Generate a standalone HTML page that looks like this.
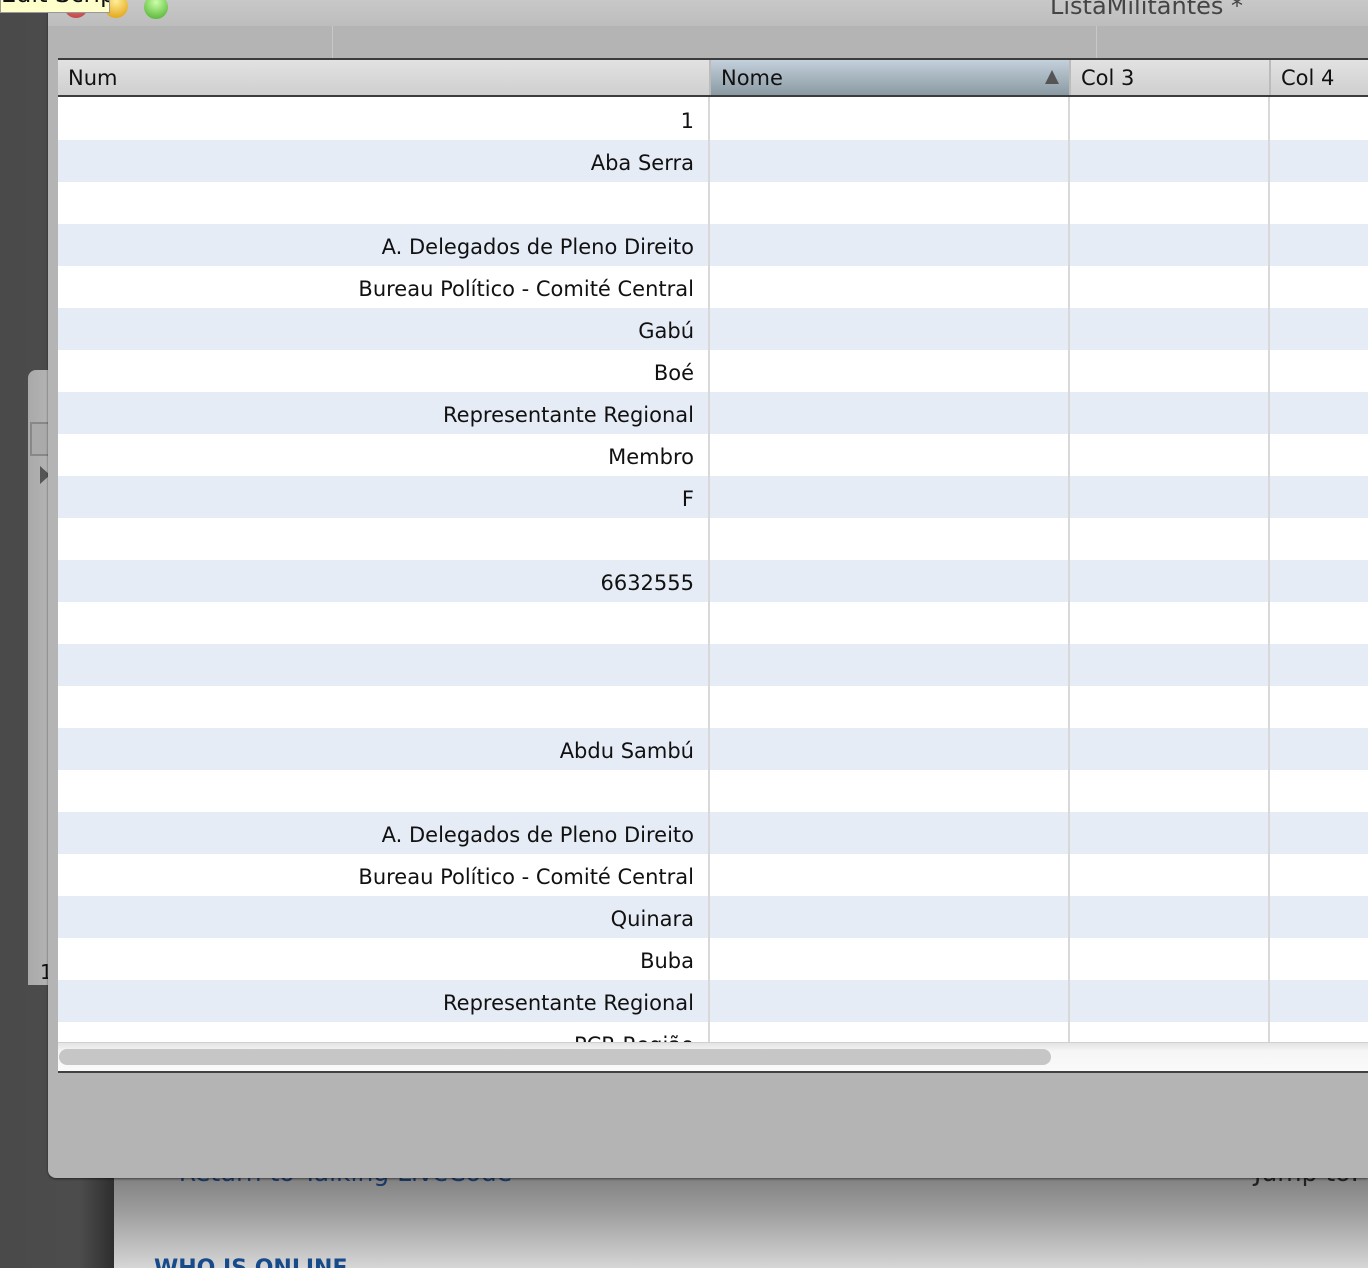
<!DOCTYPE html>
<html><head><meta charset="utf-8"><style>
*{margin:0;padding:0;box-sizing:border-box}
html{width:1368px;height:1268px;overflow:hidden}
body{width:1368px;height:1268px;overflow:hidden;position:relative;background:linear-gradient(90deg,#4a4a4a 0,#4c4c4c 80px,#2e2e2e 114px);font-family:"DejaVu Sans","Liberation Sans",sans-serif}
.abs{position:absolute}
#web{left:114px;top:1160px;width:1254px;height:108px;overflow:hidden;background:linear-gradient(#7a7a7a 0,#7f7f7f 15px,#a0a0a0 55px,#d6d6d6 108px)}
#small{left:28px;top:370px;width:30px;height:615px;background:linear-gradient(90deg,#a9a9a9,#b8b8b8);border-radius:8px 0 0 0}
#win{left:48px;top:0;width:1320px;height:1178px;background:#b4b4b4;border-radius:0 0 0 8px;box-shadow:0 1px 2px rgba(0,0,0,.5)}
#titlebar{left:0;top:0;width:1320px;height:26px;background:linear-gradient(#c8c8c8,#bdbdbd)}
.hdr{top:60px;height:35px;background:linear-gradient(#e2e2e2,#cfcfcf);font-size:21px;color:#111;line-height:37px;padding-left:10px;border-left:2px solid #bbb}
.row{left:58px;width:1310px;height:42px;font-size:21px;color:#111;line-height:46px}
.row span{position:absolute;right:674px}
.vl{top:97px;width:2px;height:945px;background:#d8d8d8}
</style></head><body>
<div id="web" class="abs">
<div class="abs" style="left:42px;top:-2px;font-size:25px;color:#1a3a6a">• Return to Talking LiveCode</div>
<div class="abs" style="left:1140px;top:-2px;font-size:25px;color:#222">Jump to:</div>
<div class="abs" style="left:40px;top:96px;font-size:22px;font-weight:bold;color:#164a8a">WHO IS ONLINE</div>
</div>
<div id="small" class="abs">
<div class="abs" style="left:2px;top:52px;width:28px;height:34px;border:2px solid #888;background:#aaa"></div>
<div class="abs" style="left:12px;top:96px;width:0;height:0;border-left:10px solid #555;border-top:9px solid transparent;border-bottom:9px solid transparent"></div>
<div class="abs" style="left:12px;top:590px;font-size:20px;color:#111">1</div>
</div>
<div id="win" class="abs">
<div id="titlebar" class="abs"></div>
<div class="abs" style="left:16px;top:-6px;width:24px;height:24px;border-radius:50%;background:radial-gradient(circle at 50% 30%,#e99,#b33)"></div>
<div class="abs" style="left:56px;top:-6px;width:24px;height:24px;border-radius:50%;background:radial-gradient(circle at 50% 30%,#fe9,#d90)"></div>
<div class="abs" style="left:96px;top:-5px;width:24px;height:24px;border-radius:50%;background:radial-gradient(circle at 50% 30%,#cfa,#4a2)"></div>
<div class="abs" style="left:1002px;top:-8px;font-size:24px;color:#444">ListaMilitantes *</div>
<div class="abs" style="left:284px;top:26px;width:1px;height:32px;background:#c8c8c8"></div>
<div class="abs" style="left:1048px;top:26px;width:1px;height:32px;background:#c8c8c8"></div>
</div>
<div class="abs" style="left:0;top:-20px;width:110px;height:33px;background:#ffffcc;border:1px solid #999;font-size:24px;line-height:26px;padding-left:0;overflow:hidden;white-space:nowrap;color:#111">Edit Script</div>
<div class="abs" style="left:58px;top:58px;width:1310px;height:2px;background:#3c3c3c"></div>
<div class="abs hdr" style="left:58px;width:651px;border-left:none">Num</div>
<div class="abs hdr" style="left:709px;width:360px;background:linear-gradient(#c4d0dc,#8a9aa2)">Nome<div class="abs" style="right:10px;top:10px;width:0;height:0;border-bottom:14px solid #555;border-left:7px solid transparent;border-right:7px solid transparent"></div></div>
<div class="abs hdr" style="left:1069px;width:200px">Col 3</div>
<div class="abs hdr" style="left:1269px;width:99px">Col 4</div>
<div class="abs" style="left:58px;top:95px;width:1310px;height:2px;background:#3c3c3c"></div>
<div class="abs" style="left:58px;top:97px;width:1310px;height:945px;background:#fff;overflow:hidden">
<div style="position:relative">
<div class="abs row" style="left:0;top:1px"><span>1</span></div>
<div class="abs row" style="left:0;top:43px;background:#e6ecf6"><span>Aba Serra</span></div>
<div class="abs row" style="left:0;top:85px"><span></span></div>
<div class="abs row" style="left:0;top:127px;background:#e6ecf6"><span>A. Delegados de Pleno Direito</span></div>
<div class="abs row" style="left:0;top:169px"><span>Bureau Político - Comité Central</span></div>
<div class="abs row" style="left:0;top:211px;background:#e6ecf6"><span>Gabú</span></div>
<div class="abs row" style="left:0;top:253px"><span>Boé</span></div>
<div class="abs row" style="left:0;top:295px;background:#e6ecf6"><span>Representante Regional</span></div>
<div class="abs row" style="left:0;top:337px"><span>Membro</span></div>
<div class="abs row" style="left:0;top:379px;background:#e6ecf6"><span>F</span></div>
<div class="abs row" style="left:0;top:421px"><span></span></div>
<div class="abs row" style="left:0;top:463px;background:#e6ecf6"><span>6632555</span></div>
<div class="abs row" style="left:0;top:505px"><span></span></div>
<div class="abs row" style="left:0;top:547px;background:#e6ecf6"><span></span></div>
<div class="abs row" style="left:0;top:589px"><span></span></div>
<div class="abs row" style="left:0;top:631px;background:#e6ecf6"><span>Abdu Sambú</span></div>
<div class="abs row" style="left:0;top:673px"><span></span></div>
<div class="abs row" style="left:0;top:715px;background:#e6ecf6"><span>A. Delegados de Pleno Direito</span></div>
<div class="abs row" style="left:0;top:757px"><span>Bureau Político - Comité Central</span></div>
<div class="abs row" style="left:0;top:799px;background:#e6ecf6"><span>Quinara</span></div>
<div class="abs row" style="left:0;top:841px"><span>Buba</span></div>
<div class="abs row" style="left:0;top:883px;background:#e6ecf6"><span>Representante Regional</span></div>
<div class="abs row" style="left:0;top:925px"><span>PCR Região</span></div>
</div></div>
<div class="abs vl" style="left:708px"></div>
<div class="abs vl" style="left:1068px"></div>
<div class="abs vl" style="left:1268px"></div>
<div class="abs" style="left:58px;top:1042px;width:1310px;height:30px;background:linear-gradient(#e4e4e4,#f6f6f6 30%,#fafafa);border-top:1px solid #d0d0d0"></div>
<div class="abs" style="left:59px;top:1049px;width:992px;height:16px;border-radius:8px;background:#c6c6c6"></div>
<div class="abs" style="left:58px;top:1071px;width:1310px;height:2px;background:#404040"></div>
</body></html>
